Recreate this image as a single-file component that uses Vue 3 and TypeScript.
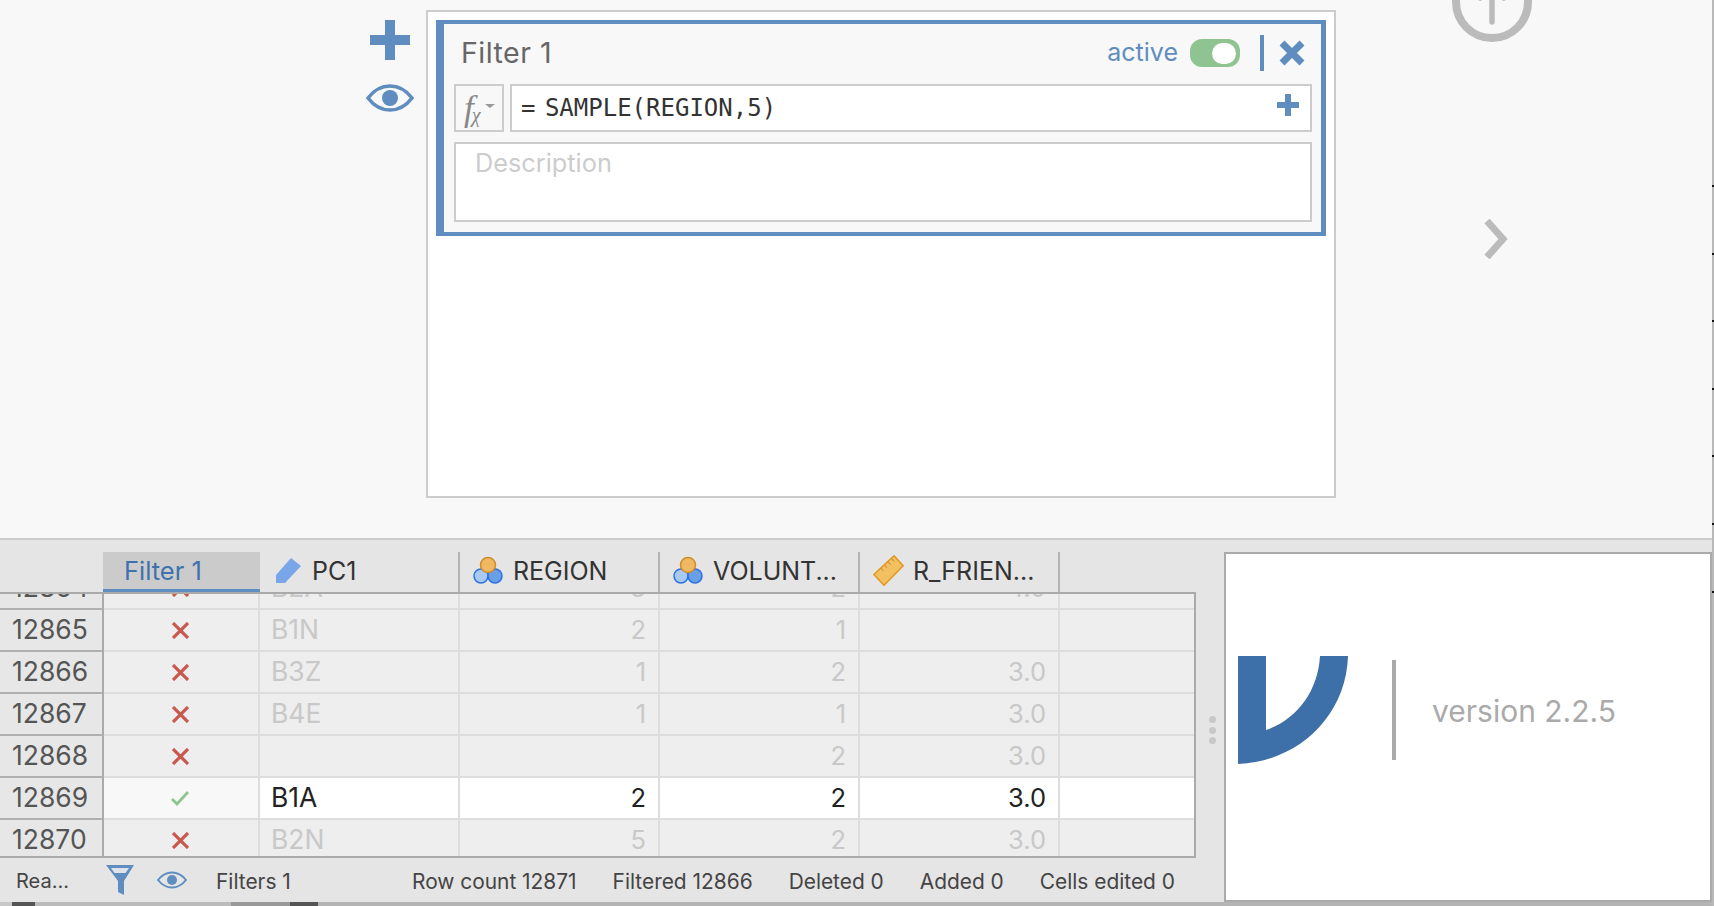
<script setup lang="ts">
interface Row { num: number; ok: boolean; pc: string; region: string; vol: string; fr: string }
const rows: Row[] = [
  { num: 12864, ok: false, pc: 'B2A', region: '3', vol: '2', fr: '4.0' },
  { num: 12865, ok: false, pc: 'B1N', region: '2', vol: '1', fr: '' },
  { num: 12866, ok: false, pc: 'B3Z', region: '1', vol: '2', fr: '3.0' },
  { num: 12867, ok: false, pc: 'B4E', region: '1', vol: '1', fr: '3.0' },
  { num: 12868, ok: false, pc: '', region: '', vol: '2', fr: '3.0' },
  { num: 12869, ok: true, pc: 'B1A', region: '2', vol: '2', fr: '3.0' },
  { num: 12870, ok: false, pc: 'B2N', region: '5', vol: '2', fr: '3.0' },
]
const ticks = [1, 2, 3, 4, 5, 6, 7]
const stats = ['Row count 12871', 'Filtered 12866', 'Deleted 0', 'Added 0', 'Cells edited 0']
</script>

<template>
  <div class="screen">
    <div class="main">
      <section class="top">
        <div class="tools">
          <svg class="plus" width="40" height="40" viewBox="0 0 40 40"><path d="M15 0h10v15h15v10H25v15H15V25H0V15h15z" /></svg>
          <svg class="eye" width="48" height="28" viewBox="0 0 48 28">
            <path d="M2 14C8 6 15 2 24 2s16 4 22 12c-6 8-13 12-22 12S8 22 2 14z" fill="none" stroke="#5f8dbf" stroke-width="3.6" />
            <circle cx="24" cy="14" r="8" fill="#5f8dbf" />
          </svg>
        </div>
        <div class="canvas">
          <div class="filter">
            <div class="filter-head">
              <span class="filter-title">Filter 1</span>
              <span class="active">active</span>
              <span class="toggle"><span class="knob"></span></span>
              <span class="vbar"></span>
              <svg class="close" width="26" height="26" viewBox="0 0 26 26"><path d="M3 3l20 20M23 3L3 23" stroke="#5f8dbf" stroke-width="7" fill="none" /></svg>
            </div>
            <div class="formula">
              <div class="fx"><span class="f">f</span><span class="x">χ</span><span class="caret"></span></div>
              <div class="expr">
                <span class="code">= SAMPLE(REGION,5)</span>
                <svg width="22" height="22" viewBox="0 0 22 22"><path d="M8 0h6v8h8v6h-8v8H8v-8H0V8h8z" fill="#5f8dbf" /></svg>
              </div>
            </div>
            <div class="desc">Description</div>
          </div>
        </div>
        <div class="side">
          <svg class="circle" width="80" height="80" viewBox="0 0 80 80">
            <circle cx="40" cy="40" r="36" fill="none" stroke="#bbb" stroke-width="8" />
            <path d="M40 60V22M28 36l12-14 12 14" fill="none" stroke="#bbb" stroke-width="5.5" stroke-linecap="round" />
          </svg>
          <svg class="chev" width="24" height="40" viewBox="0 0 24 40"><path d="M3 2l16 18L3 38" fill="none" stroke="#bbb" stroke-width="7" /></svg>
        </div>
      </section>

      <section class="bottom">
        <div class="left">
          <div class="table">
            <div class="grid thead">
              <div class="th corner"></div>
              <div class="th th-filter">Filter 1</div>
              <div class="th th-pc">
                <svg width="25" height="25" viewBox="0 0 25 25"><path d="M0 25V17L15 0l10 8L9 25z" fill="#79a6e8" /></svg>
                <span>PC1</span>
              </div>
              <div class="th">
                <svg width="30" height="30" viewBox="0 0 30 30">
                  <circle cx="8" cy="20" r="7" fill="#a9c8f2" stroke="#2b72e0" stroke-width="1.5" />
                  <circle cx="22" cy="20" r="7" fill="#6a9fe8" stroke="#2b72e0" stroke-width="1.5" />
                  <circle cx="15" cy="9" r="7.5" fill="#f0b860" stroke="#d08c28" stroke-width="1.5" />
                </svg>
                <span>REGION</span>
              </div>
              <div class="th">
                <svg width="30" height="30" viewBox="0 0 30 30">
                  <circle cx="8" cy="20" r="7" fill="#a9c8f2" stroke="#2b72e0" stroke-width="1.5" />
                  <circle cx="22" cy="20" r="7" fill="#6a9fe8" stroke="#2b72e0" stroke-width="1.5" />
                  <circle cx="15" cy="9" r="7.5" fill="#f0b860" stroke="#d08c28" stroke-width="1.5" />
                </svg>
                <span>VOLUNT...</span>
              </div>
              <div class="th th-ruler">
                <svg width="31" height="31" viewBox="0 0 31 31">
                  <path d="M.8 19.500L21 .8l9.200 10L11 30.200z" fill="#f3c061" stroke="#e2971f" stroke-width="1.5" stroke-linejoin="round" />
                  <path d="M8 13l2.500 3M11.500 9.800l2.500 3M15 6.600l2.500 3M18.500 3.400l2.500 3" stroke="#c98a26" stroke-width="1" fill="none" />
                </svg>
                <span>R_FRIEN...</span>
              </div>
              <div class="th-rest"></div>
            </div>
            <div class="tbody">
              <div v-for="r in rows" :key="r.num" class="grid row" :class="{ on: r.ok }">
                <div class="td num">{{ r.num }}</div>
                <div class="td mark">
                  <svg v-if="r.ok" width="18" height="15" viewBox="0 0 18 15"><path d="M1 8l5 5L17 1" fill="none" stroke="#8ec58f" stroke-width="2.800" /></svg>
                  <svg v-else width="17" height="17" viewBox="0 0 17 17"><path d="M1 1l15 15M16 1L1 16" fill="none" stroke="#c9584f" stroke-width="3.200" /></svg>
                </div>
                <div class="td pc">{{ r.pc }}</div>
                <div class="td right">{{ r.region }}</div>
                <div class="td right">{{ r.vol }}</div>
                <div class="td right">{{ r.fr }}</div>
                <div class="td last"></div>
              </div>
            </div>
          </div>
          <footer class="status">
            <span class="ready">Rea...</span>
            <svg class="funnel" width="28" height="30" viewBox="0 0 28 30">
              <path d="M0 0h28L18 16v14l-6-3V16z" fill="#5f8dbf" />
              <path d="M5 3h18l-3.500 5h-11z" fill="#dfe3e8" />
            </svg>
            <svg class="seye" width="30" height="18" viewBox="0 0 30 18">
              <path d="M1 9c4-5 8.500-7.500 14-7.500S25 4 29 9c-4 5-8.500 7.500-14 7.500S5 14 1 9z" fill="none" stroke="#5f8dbf" stroke-width="2" />
              <circle cx="15" cy="9" r="5" fill="#5f8dbf" />
            </svg>
            <span class="filters">Filters 1</span>
            <span v-for="s in stats" :key="s" class="stat">{{ s }}</span>
          </footer>
        </div>
        <div class="dots"><i></i><i></i><i></i></div>
        <div class="about">
          <svg class="logo" width="110" height="108" viewBox="0 0 110 108">
            <path d="M0 0H28V74C58 64 80 36 82 0H110C108 62 58 106 0 108Z" fill="#3d6fa8" />
          </svg>
          <span class="about-sep"></span>
          <span class="version">version 2.2.5</span>
        </div>
      </section>

      <div class="strip">
        <i class="s1"></i><i class="s2"></i><i class="s3"></i><i class="s4"></i><i class="s5"></i>
      </div>
    </div>
    <div class="edge"><i v-for="t in ticks" :key="t"></i></div>
  </div>
</template>

<style>
html, body { margin: 0; padding: 0; overflow: hidden; background: #f8f8f8; }
</style>

<style scoped>
.screen { width: 1714px; height: 906px; display: flex; overflow: hidden; font-family: Inter, "Liberation Sans", sans-serif; }
.main { width: 1712px; display: flex; flex-direction: column; }
.edge { width: 2px; background: #b9b9b9; display: flex; flex-direction: column; gap: 65.600px; padding-top: 185px; box-sizing: border-box; }
.edge i { display: block; height: 2px; background: #111; }

.top { height: 538px; box-sizing: border-box; background: #f8f8f8; display: flex; padding: 10px 0 0 366px; overflow: hidden; }
.tools { width: 48px; padding-top: 10px; display: flex; flex-direction: column; align-items: center; gap: 24px; }
.plus { fill: #5f8dbf; }
.canvas { margin-left: 12px; width: 910px; height: 488px; box-sizing: border-box; border: 2px solid #ccc; background: #fff; padding: 8px; }
.filter { width: 890px; height: 216px; box-sizing: border-box; border: solid #5f8dbf; border-width: 4px 5px 4px 8px; background: #f8f8f8; padding: 0 9px 0 10px; }
.filter-head { height: 60px; display: flex; align-items: center; padding-bottom: 2px; box-sizing: border-box; }
.filter-title { font-size: 28.500px; letter-spacing: .5px; color: #666; margin: 0 auto 1px 7px; }
.active { font-size: 25px; color: #5f8dbf; margin: 0 12px 2px 0; }
.toggle { width: 50px; height: 28px; border-radius: 12px; background: #8fc391; display: flex; align-items: center; justify-content: flex-end; padding-right: 4px; box-sizing: border-box; }
.knob { width: 24px; height: 21px; border-radius: 11px; background: #fff; }
.vbar { width: 4px; height: 36px; background: #5f8dbf; margin-left: 20px; margin-right: 15px; }
.close { margin-right: 7px; }
.formula { display: flex; gap: 6px; height: 48px; }
.fx { width: 50px; box-sizing: border-box; border: 2px solid #ccc; background: #f8f8f8; display: flex; align-items: center; padding-left: 8px; color: #888; font-family: "Liberation Serif", serif; font-style: italic; }
.f { font-size: 35px; line-height: 1; }
.x { font-size: 20px; margin-top: 14px; margin-left: -2px; }
.caret { width: 0; height: 0; border-left: 5px solid transparent; border-right: 5px solid transparent; border-top: 4px solid #999; margin-left: 4px; margin-bottom: 4px; }
.expr { flex: 1; box-sizing: border-box; border: 2px solid #ccc; background: #fff; display: flex; align-items: center; justify-content: space-between; padding: 0 11px 0 9px; font-family: "DejaVu Sans Mono", monospace; font-size: 24px; color: #333; }
.code { word-spacing: -5px; }
.expr svg { margin-bottom: 7px; }
.desc { margin-top: 10px; height: 80px; box-sizing: border-box; border: 2px solid #ccc; background: #fff; padding: 3px 0 0 19px; font-size: 25.300px; color: #ccc; }
.side { margin-left: 116px; display: flex; flex-direction: column; align-items: center; width: 80px; margin-top: -48px; }
.chev { margin-top: 177px; margin-left: 8px; }

.bottom { height: 364px; box-sizing: border-box; border-top: 2px solid #ccc; background: #e5e5e5; display: flex; }
.left { width: 1196px; display: flex; flex-direction: column; flex: none; }
.table { flex: none; }
.grid { display: grid; grid-template-columns: 104px 156px 200px 200px 200px 200px 1fr; }
.thead { margin-top: 12px; height: 42px; box-sizing: border-box; border-bottom: 2px solid #aaa; }
.th { display: flex; align-items: center; gap: 10px; padding: 0 0 3px 13px; border-right: 2px solid #b4b4b4; font-size: 25px; color: #333; white-space: nowrap; box-sizing: border-box; }
.th svg { flex: none; }
.th-pc { padding-left: 16px; gap: 11px; }
.th-ruler { padding-left: 13px; gap: 9px; }
.corner { border-right: 0; }
.th-filter { background: #cbcbcb; color: #3f72ad; border-right: 0; border-bottom: 3px solid #5f8dbf; padding: 0 0 0 21px; margin-left: -1px; font-size: 25.500px; }
.tbody { height: 264px; overflow: hidden; box-sizing: border-box; border-right: 2px solid #aaa; border-bottom: 2px solid #aaa; background: #eee; }
.row { height: 42px; margin: 0; }
.row:first-child { margin-top: -26px; }
.td { background: #eee; border-right: 2px solid #ddd; border-bottom: 2px solid #ddd; display: flex; align-items: center; padding: 0 12px 2px 11px; font-size: 25.500px; color: #c8c8c8; box-sizing: border-box; }
.td.last { border-right: 0; }
.right { justify-content: flex-end; }
.pc { font-size: 26.500px; }
.num { background: #e7e7e7; color: #555; padding: 0 0 2px 12px; border-right: 2px solid #aaa; border-bottom-color: #b0b0b0; font-size: 26.500px; }
.mark { justify-content: center; padding: 0 2px 0 0; }
.on .td { background: #fff; color: #222; }
.on .num { background: #e7e7e7; color: #555; }
.on .mark { background: #f8f8f8; }
.status { height: 44px; display: flex; align-items: center; font-size: 20.900px; color: #444; white-space: nowrap; }
.ready { margin: 2px 0 0 16px; width: 90px; flex: none; font-size: 20px; }
.funnel { flex: none; }
.seye { flex: none; margin-left: 23px; }
.filters { margin: 2px 0 0 29px; width: 196px; flex: none; }
.stat { margin: 2px 36px 0 0; }
.dots { width: 28px; flex: none; display: flex; flex-direction: column; align-items: center; justify-content: center; gap: 3.500px; padding: 18px 0 0 4px; box-sizing: border-box; }
.dots i { display: block; width: 7px; height: 7px; border-radius: 50%; background: #c8c8c8; }
.about { margin-top: 12px; flex: 1; height: 350px; box-sizing: border-box; border: 2px solid #aaa; background: #fff; display: flex; align-items: center; padding: 0 0 34px 12px; }
.logo { flex: none; }
.about-sep { width: 4px; height: 100px; background: #aaa; margin-left: 44px; flex: none; }
.version { font-size: 30px; color: #aaa; margin: 2px 0 0 36px; }
.strip { height: 4px; background: #b4b4b4; display: flex; }
.strip i { display: block; height: 4px; }
.s1 { width: 12px; background: #c8c8c8; }
.s2 { width: 23px; background: #555; }
.s3 { width: 196px; background: #bbb; }
.s4 { width: 59px; background: #999; }
.s5 { width: 28px; background: #555; }
</style>
